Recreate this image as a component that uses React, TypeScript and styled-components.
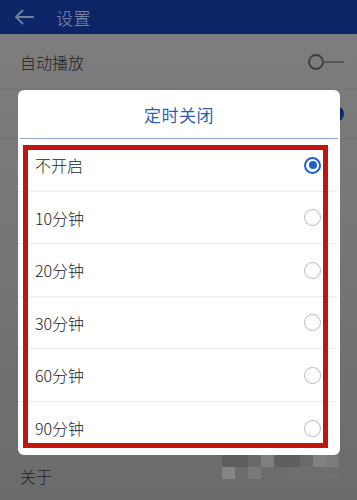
import React from "react";
import styled, { createGlobalStyle } from "styled-components";

const GlobalStyle = createGlobalStyle`
  html, body { margin: 0; padding: 0; }
  body {
    font-family: "Noto Sans CJK SC", "Noto Sans", sans-serif;
    -webkit-font-smoothing: antialiased;
  }
`;

const Page = styled.div`
  position: relative;
  width: 357px;
  height: 500px;
  overflow: hidden;
  display: flex;
  flex-direction: column;
  background: linear-gradient(180deg, #7e7e7e 0%, #767676 50%, #6b6b6b 100%);
`;

const Header = styled.header`
  height: 34px;
  flex: none;
  display: flex;
  align-items: center;
  background: #0d2466;
  padding-left: 14px;
  gap: 22px;
`;

const HeaderTitle = styled.span`
  font-size: 17px;
  font-weight: 300;
  color: #8390ab;
  letter-spacing: 0.5px;
`;

const SettingRow = styled.div<{ $h: number }>`
  height: ${(p) => p.$h}px;
  flex: none;
  display: flex;
  align-items: center;
  justify-content: space-between;
  padding: 0 12px 0 20px;
  font-size: 16px;
  font-weight: 300;
  color: #1e1e1e;
  border-bottom: 1px solid rgba(90, 90, 90, 0.25);
`;

const Spacer = styled.div`
  flex: 1;
`;

const BottomRow = styled.div`
  height: 48px;
  flex: none;
  display: flex;
  align-items: center;
  padding: 0 19px 0 20px;
  font-size: 16px;
  font-weight: 300;
  color: #1e1e1e;
  position: relative;
`;

const Mosaic = styled.div`
  position: absolute;
  left: 222px;
  top: 3px;
  display: grid;
  grid-template-columns: repeat(9, 13px);
  grid-auto-rows: 12px;
`;

const Tile = styled.div<{ $c: string }>`
  background: ${(p) => p.$c};
`;

const Dialog = styled.div`
  position: absolute;
  left: 18px;
  top: 90px;
  width: 322px;
  height: 365px;
  background: #ffffff;
  border-radius: 6px;
  display: flex;
  flex-direction: column;
`;

const DialogTitle = styled.div`
  height: 48px;
  flex: none;
  display: flex;
  align-items: center;
  justify-content: center;
  font-size: 17px;
  font-weight: 400;
  color: #2c5fb3;
  letter-spacing: 0.5px;
  border-bottom: 1px solid #86a6c4;
  margin: 0 2px;
`;

const OptionList = styled.div`
  display: flex;
  flex-direction: column;
`;

const OptionRow = styled.div<{ $last?: boolean }>`
  height: 52.5px;
  flex: none;
  box-sizing: border-box;
  display: flex;
  align-items: center;
  justify-content: space-between;
  padding: 1px 19px 0 17px;
  font-size: 16px;
  font-weight: 300;
  color: #222222;
  border-bottom: ${(p) => (p.$last ? "none" : "1px solid #ececec")};
  margin-right: 3px;
`;

const Radio = styled.span<{ $on?: boolean }>`
  width: 17px;
  height: 17px;
  box-sizing: border-box;
  border-radius: 50%;
  border: ${(p) => (p.$on ? "2px solid #1f5fc8" : "1.5px solid #b8b8b8")};
  display: flex;
  align-items: center;
  justify-content: center;
  margin-right: -3px;
  &::after {
    content: "";
    display: ${(p) => (p.$on ? "block" : "none")};
    width: 8px;
    height: 8px;
    border-radius: 50%;
    background: #1f5fc8;
  }
`;

const Highlight = styled.div`
  position: absolute;
  left: 5px;
  top: 55px;
  width: 305px;
  height: 303px;
  box-sizing: border-box;
  border: 5px solid #c1160d;
  pointer-events: none;
`;

const BackArrow = () => (
  <svg width="20" height="16" viewBox="0 0 20 16" fill="none">
    <path
      d="M19 8H2M8.5 1.5L2 8l6.5 6.5"
      stroke="#6f80a4"
      strokeWidth="2"
      strokeLinecap="round"
      strokeLinejoin="round"
    />
  </svg>
);

const ToggleOff = () => (
  <svg width="38" height="18" viewBox="0 0 38 18" fill="none">
    <circle cx="9" cy="9" r="7" stroke="#3c3c3c" strokeWidth="1.8" />
    <path d="M16 9H37" stroke="#4a4a4a" strokeWidth="1.4" />
  </svg>
);

const ToggleOn = () => (
  <svg width="38" height="18" viewBox="0 0 38 18" fill="none">
    <path d="M1 9H22" stroke="#4a4a4a" strokeWidth="1.4" />
    <circle cx="29" cy="9" r="8" fill="#0f2866" />
  </svg>
);

const options = ["不开启", "10分钟", "20分钟", "30分钟", "60分钟", "90分钟"];

const mosaic = [
  "#5e5e5e", "#5e5e5e", "#696969", "#7f7f7f", "#5f5f5f", "#5f5f5f", "#6a6a6a", "#818181", "#7b7b7b",
  "#858585", "#6c6c6c", "#7a7a7a", "#6d6d6d", "#6d6d6d", "#6e6e6e", "#6e6e6e", "#6e6e6e", "#6f6f6f",
];

export default function App() {
  return (
    <>
      <GlobalStyle />
      <Page>
        <Header>
          <BackArrow />
          <HeaderTitle>设置</HeaderTitle>
        </Header>
        <SettingRow $h={55}>
          <span>自动播放</span>
          <ToggleOff />
        </SettingRow>
        <SettingRow $h={48}>
          <span>后台播放</span>
          <ToggleOn />
        </SettingRow>
        <Spacer />
        <BottomRow>
          <span>关于</span>
          <Mosaic>
            {mosaic.map((c, i) => (
              <Tile key={i} $c={c} />
            ))}
          </Mosaic>
        </BottomRow>
        <Dialog>
          <DialogTitle>定时关闭</DialogTitle>
          <OptionList>
            {options.map((o, i) => (
              <OptionRow key={o} $last={i === options.length - 1}>
                <span>{o}</span>
                <Radio $on={i === 0} />
              </OptionRow>
            ))}
          </OptionList>
          <Highlight />
        </Dialog>
      </Page>
    </>
  );
}
